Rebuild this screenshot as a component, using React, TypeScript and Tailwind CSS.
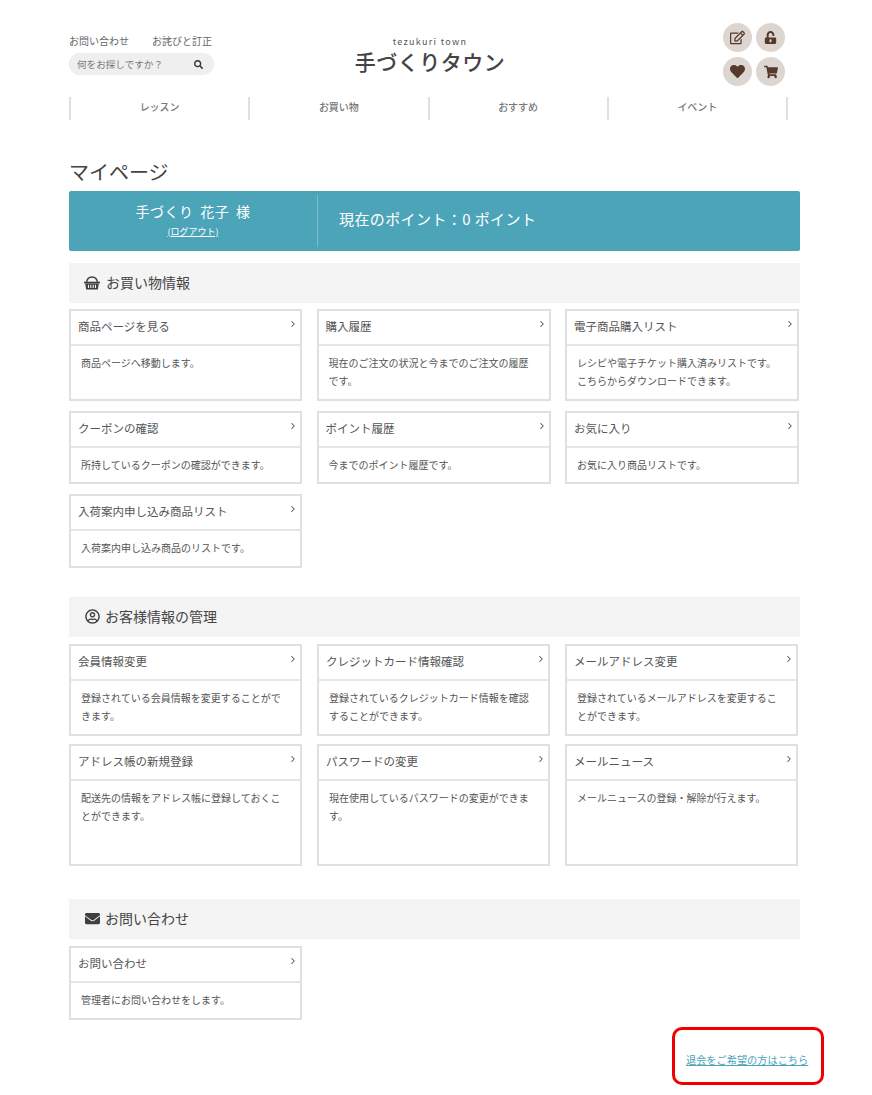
import { ChevronRight } from "lucide-react";
import { FaHeart, FaRegEdit, FaRegUserCircle, FaSearch, FaShoppingCart, FaUnlockAlt, FaEnvelope } from "react-icons/fa";
import type { ReactNode } from "react";

const font = "font-['Noto_Sans_CJK_JP','Liberation_Sans',sans-serif]";

const navItems = ["レッスン", "お買い物", "おすすめ", "イベント"];

function BasketIcon() {
  return (
    <svg width="16" height="14" viewBox="0 0 16 14" fill="none" stroke="currentColor">
      <path d="M2.5 6.5 C3 2.5 5 1 8 1 C11 1 13 2.5 13.5 6.5" strokeWidth="1.4" />
      <path d="M0 5.7 H16 V7.4 H0 Z" fill="currentColor" stroke="none" />
      <path d="M1.2 7.4 H14.8 L13.8 13.5 H2.2 Z" fill="currentColor" stroke="none" />
      <path d="M4.5 8.8 V12 M6.8 8.8 V12 M9.2 8.8 V12 M11.5 8.8 V12" stroke="#f4f4f4" strokeWidth="1.1" />
    </svg>
  );
}

function RoundIcon({ children }: { children: ReactNode }) {
  return (
    <div className="flex h-[29px] w-[29px] items-center justify-center rounded-full bg-[#ddd6d0] text-[15px] text-[#55392b]">
      {children}
    </div>
  );
}

function SectionTitle({ icon, title, gap }: { icon: ReactNode; title: string; gap: string }) {
  return (
    <div className={`flex h-10 items-center bg-[#f4f4f4] pb-px pl-[15px] text-[14px] text-[#444] ${gap}`}>
      <span className="flex w-4 justify-center text-[15px] text-[#3f3f3f]">{icon}</span>
      {title}
    </div>
  );
}

function Card({ title, text, h }: { title: string; text: string; h: string }) {
  return (
    <div className={`flex flex-col border-2 border-[#e0e0e0] bg-white ${h}`}>
      <div className="relative flex h-[35px] shrink-0 items-center border-b-2 border-[#e6e6e6] pb-px pl-[7px] text-[11.5px] text-[#555]">
        {title}
        <ChevronRight size={10} strokeWidth={2.5} className="absolute right-[2px] top-[8px] text-[#555]" />
      </div>
      <p className="pl-[10px] pr-[12px] pt-[8px] text-[10px] leading-[17.5px] text-[#555]">{text}</p>
    </div>
  );
}

export default function App() {
  return (
    <div className={`min-h-[1095px] w-[872px] overflow-hidden bg-white ${font}`}>
      <div className="ml-[69px] w-[731px]">
        {/* HEADER */}
        <header className="flex h-[97px] items-start pt-[23px]">
          <div className="w-[145px]">
            <div className="mt-[11px] flex gap-[23px] text-[10px] leading-[14px] text-[#666]">
              <span>お問い合わせ</span>
              <span>お詫びと訂正</span>
            </div>
            <div className="mt-[5px] flex h-[22px] items-center justify-between rounded-full bg-[#efefef] pl-[8px] pr-[11px] text-[9.6px] text-[#777]">
              何をお探しですか？
              <FaSearch size={9} className="text-[#333]" />
            </div>
          </div>
          <div className="ml-[140px] mt-[13px] w-[152px] text-center">
            <p className="text-[9px] leading-[11px] tracking-[1.3px] text-[#555]">tezukuri town</p>
            <p className="mt-[1px] text-[21px] font-medium leading-[26px] tracking-[0.5px] text-[#444]">手づくりタウン</p>
          </div>
          <div className="ml-[217px] grid grid-cols-2 gap-x-[4px] gap-y-[5px]">
            <RoundIcon><FaRegEdit /></RoundIcon>
            <RoundIcon><FaUnlockAlt size={13} /></RoundIcon>
            <RoundIcon><FaHeart /></RoundIcon>
            <RoundIcon><FaShoppingCart size={14} /></RoundIcon>
          </div>
        </header>

        {/* NAV */}
        <nav className="flex h-[23px] w-[719px] border-r-2 border-[#e0e0e0]">
          {navItems.map((item) => (
            <div key={item} className="flex flex-1 items-center justify-center border-l-2 border-[#e0e0e0] pb-[4px] text-[10px] font-medium text-[#777]">
              {item}
            </div>
          ))}
        </nav>

        <h1 className="mt-[39px] text-[20px] leading-[26px] text-[#444]">マイページ</h1>

        {/* POINT BAR */}
        <div className="mt-[6px] flex h-[60px] items-center rounded-[2px] bg-[#4ca4b9] text-white">
          <div className="flex h-[52px] w-[249px] flex-col items-center border-r border-[#7cbdcc]">
            <p className="mt-[7px] text-[14px] leading-[18px] tracking-[0.5px] [word-spacing:3px]">手づくり 花子 様</p>
            <p className="mt-[6px] text-[9px] leading-[12px] underline">(ログアウト)</p>
          </div>
          <p className="mb-[4px] ml-[21px] text-[15px] tracking-[0.4px]">現在のポイント：0 ポイント</p>
        </div>

        {/* SHOPPING */}
        <div className="mt-[12px]">
          <SectionTitle gap="gap-[6px]" icon={<BasketIcon />} title="お買い物情報" />
          <div className="mt-[6px] grid w-[730px] grid-cols-[233px_234px_234px] gap-x-[14.5px] gap-y-[10px]">
            <Card h="h-[92px]" title="商品ページを見る" text="商品ページへ移動します。" />
            <Card h="h-[92px]" title="購入履歴" text="現在のご注文の状況と今までのご注文の履歴です。" />
            <Card h="h-[92px]" title="電子商品購入リスト" text="レシピや電子チケット購入済みリストです。こちらからダウンロードできます。" />
            <Card h="h-[73px]" title="クーポンの確認" text="所持しているクーポンの確認ができます。" />
            <Card h="h-[73px]" title="ポイント履歴" text="今までのポイント履歴です。" />
            <Card h="h-[73px]" title="お気に入り" text="お気に入り商品リストです。" />
            <Card h="h-[74px]" title="入荷案内申し込み商品リスト" text="入荷案内申し込み商品のリストです。" />
          </div>
        </div>

        {/* CUSTOMER */}
        <div className="mt-[29px]">
          <SectionTitle gap="gap-[5px]" icon={<FaRegUserCircle />} title="お客様情報の管理" />
          <div className="mt-[7px] grid w-[730px] grid-cols-[233px_233px_233px] gap-x-[15px] gap-y-[8px]">
            <Card h="h-[92px]" title="会員情報変更" text="登録されている会員情報を変更することができます。" />
            <Card h="h-[92px]" title="クレジットカード情報確認" text="登録されているクレジットカード情報を確認することができます。" />
            <Card h="h-[92px]" title="メールアドレス変更" text="登録されているメールアドレスを変更することができます。" />
            <Card h="h-[122px]" title="アドレス帳の新規登録" text="配送先の情報をアドレス帳に登録しておくことができます。" />
            <Card h="h-[122px]" title="パスワードの変更" text="現在使用しているパスワードの変更ができます。" />
            <Card h="h-[122px]" title="メールニュース" text="メールニュースの登録・解除が行えます。" />
          </div>
        </div>

        {/* CONTACT */}
        <div className="mt-[33px]">
          <SectionTitle gap="gap-[5px]" icon={<FaEnvelope />} title="お問い合わせ" />
          <div className="mt-[7px] w-[233px]">
            <Card h="h-[74px]" title="お問い合わせ" text="管理者にお問い合わせをします。" />
          </div>
        </div>

        {/* WITHDRAW LINK */}
        <div className="relative ml-[617px] mt-[33px] w-[123px] whitespace-nowrap text-[10.2px] leading-[14px] text-[#4ca4b9] underline">
          退会をご希望の方はこちら
          <div className="absolute -left-[14px] -top-[26px] h-[58px] w-[152px] rounded-[10px] border-[3px] border-[#f00000]" />
        </div>
      </div>
    </div>
  );
}
